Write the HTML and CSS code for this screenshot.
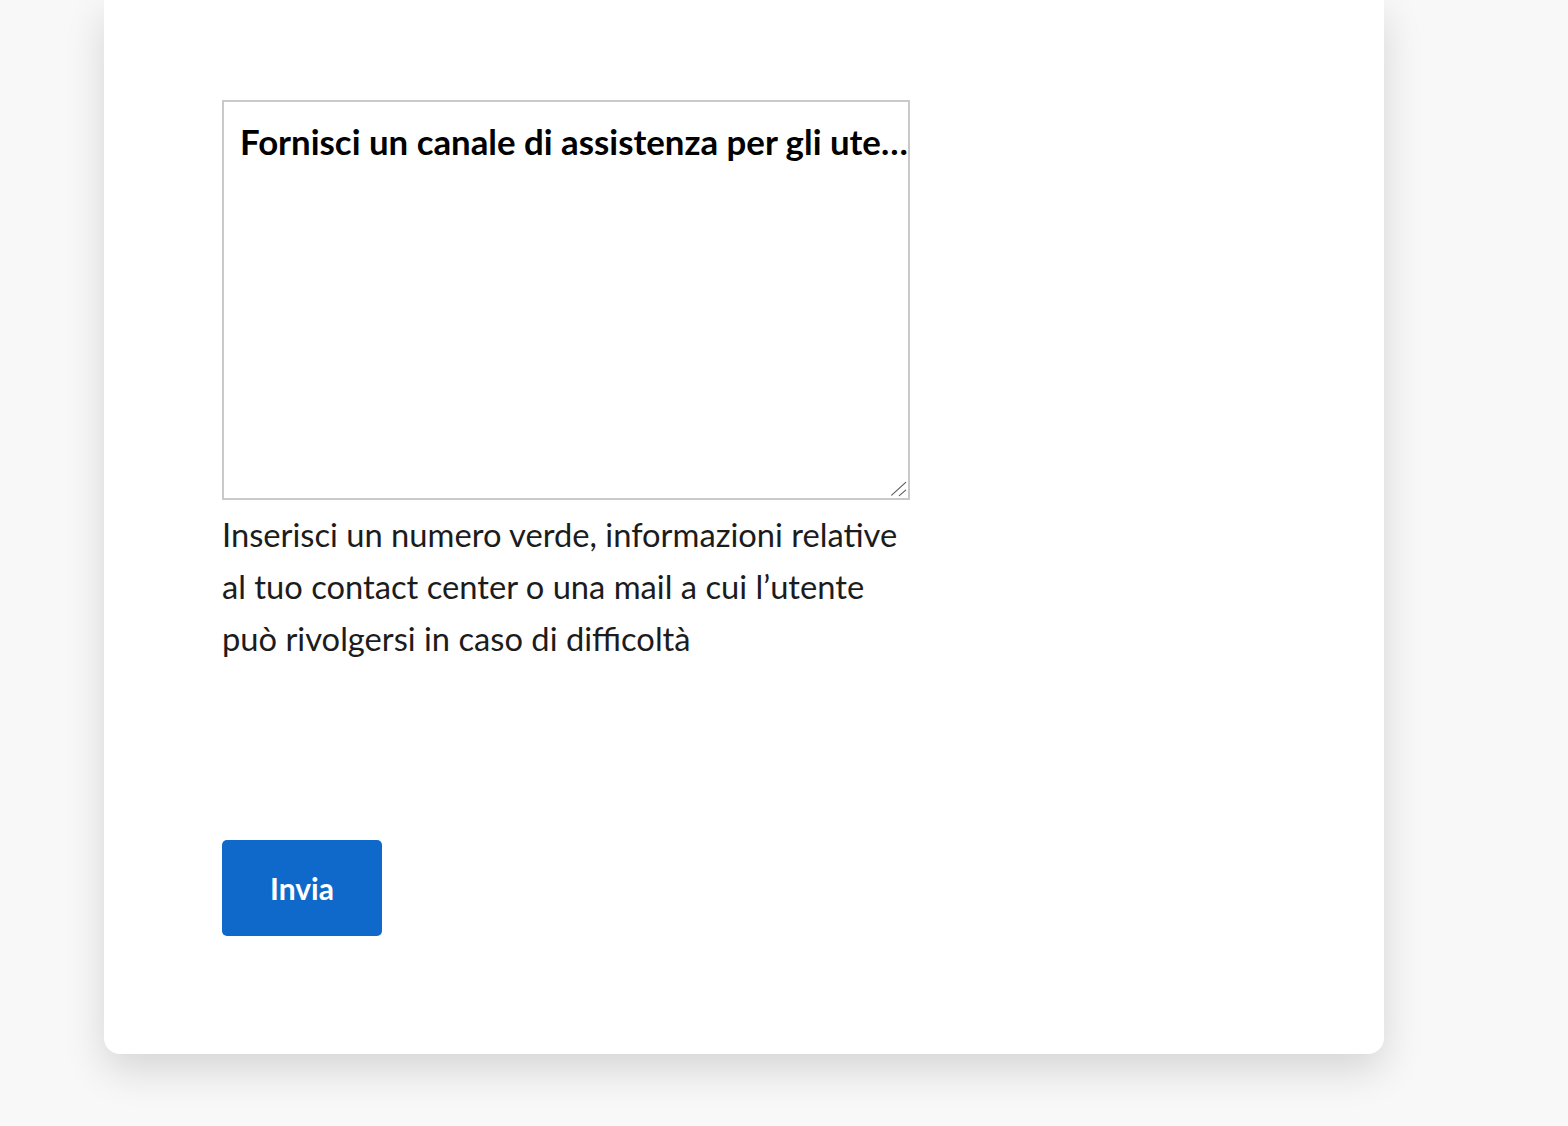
FILE: index.html
```html
<!DOCTYPE html>
<html lang="it">
<head>
<meta charset="utf-8">
<title>Assistenza</title>
<link rel="stylesheet" href="styles.css">
</head>
<body>
<main class="page">
  <section class="card">
    <form class="form">
      <div class="field">
        <div class="textarea" role="textbox" aria-multiline="true">
          <span class="placeholder">Fornisci un canale di assistenza per gli ute…</span>
          <svg class="grip" width="18" height="18" viewBox="0 0 18 18" aria-hidden="true">
            <line x1="1.7" y1="15.2" x2="15.7" y2="2.3" stroke="#5a5a5a" stroke-width="1.1" stroke-linecap="round"/>
            <line x1="9.3" y1="15.7" x2="15.7" y2="10.2" stroke="#5a5a5a" stroke-width="1.1" stroke-linecap="round"/>
          </svg>
        </div>
        <p class="help">Inserisci un numero verde, informazioni relative al tuo contact center o una mail a cui l’utente può rivolgersi in caso di difficoltà</p>
      </div>
      <button type="button" class="btn-primary">Invia</button>
    </form>
  </section>
</main>
</body>
</html>
```
FILE: styles.css
```css
html, body {
  margin: 0;
  padding: 0;
  background: #f8f8f8;
  font-family: "Lato", "Roboto", sans-serif;
  color: #1c1c1c;
}
.page {
  height: 1126px;
  overflow: hidden;
  padding-left: 104px;
}
.card {
  width: 1280px;
  box-sizing: border-box;
  background: #ffffff;
  border-radius: 0 0 16px 16px;
  box-shadow: 0 16px 40px rgba(0, 0, 0, 0.14);
  padding: 100px 118px 118px 118px;
}
.form {
  display: flex;
  flex-direction: column;
  align-items: flex-start;
}
.field {
  width: 688px;
}
.textarea {
  position: relative;
  box-sizing: border-box;
  width: 688px;
  height: 400px;
  border: 2px solid #c9c9c9;
  padding: 19px 0 0 16px;
  overflow: hidden;
  background: #fff;
}
.placeholder {
  display: block;
  font-weight: 700;
  font-size: 34.8px;
  line-height: 1.2;
  color: #000;
  white-space: nowrap;
}
.grip {
  position: absolute;
  right: 0;
  bottom: 0;
  display: block;
}
.help {
  margin: 9px 0 0 0;
  font-size: 32.7px;
  line-height: 52px;
  color: #1c1c1c;
}
.btn-primary {
  margin-top: 175px;
  width: 160px;
  height: 96px;
  border: none;
  border-radius: 5px;
  background: #0f69ca;
  color: #fff;
  font-family: "Lato", "Roboto", sans-serif;
  font-weight: 700;
  font-size: 30px;
  padding: 0;
  cursor: pointer;
}
```
